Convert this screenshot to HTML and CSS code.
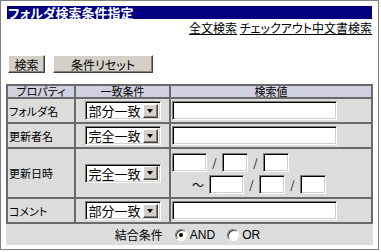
FILE: index.html
```
<!DOCTYPE html>
<html lang="ja">
<head>
    <meta charset="utf-8" />
    <title>フォルダ検索条件指定</title>
    <link rel="stylesheet" href="styles.css">
</head>
<body>
    <div id="frame">
        <div class="titleBar">フォルダ検索条件指定</div>
        <div class="links">
            <a href="#">全文検索</a>
            <a href="#">チェックアウト中文書検索</a>
        </div>

        <div class="buttons">
            <span class="btn btnSearch">検索</span>
            <span class="btn btnReset">条件リセット</span>
        </div>

        <table class="searchTable">
            <colgroup>
                <col class="colProp">
                <col class="colMatch">
                <col class="colValue">
            </colgroup>
            <tr class="headRow">
                <th>プロパティ</th>
                <th>一致条件</th>
                <th>検索値</th>
            </tr>
            <tr>
                <td class="label">フォルダ名</td>
                <td class="match">
                    <span class="select"><span class="selText">部分一致</span><span class="arrow"></span></span>
                </td>
                <td class="value"><span class="textInput wide"></span></td>
            </tr>
            <tr>
                <td class="label">更新者名</td>
                <td class="match">
                    <span class="select"><span class="selText">完全一致</span><span class="arrow"></span></span>
                </td>
                <td class="value"><span class="textInput wide"></span></td>
            </tr>
            <tr class="dateRow">
                <td class="label">更新日時</td>
                <td class="match">
                    <span class="select"><span class="selText">完全一致</span><span class="arrow"></span></span>
                </td>
                <td class="value">
                    <div class="dateLine">
                        <span class="textInput year"></span>
                        <span class="sep">/</span>
                        <span class="textInput day"></span>
                        <span class="sep">/</span>
                        <span class="textInput day"></span>
                    </div>
                    <div class="dateLine second">
                        <span class="tilde">～</span>
                        <span class="textInput year"></span>
                        <span class="sep">/</span>
                        <span class="textInput day"></span>
                        <span class="sep">/</span>
                        <span class="textInput day"></span>
                    </div>
                </td>
            </tr>
            <tr>
                <td class="label">コメント</td>
                <td class="match">
                    <span class="select"><span class="selText">部分一致</span><span class="arrow"></span></span>
                </td>
                <td class="value"><span class="textInput wide"></span></td>
            </tr>
        </table>

        <div class="joinRow">
            <span class="joinLabel">結合条件</span>
            <span class="radio checked"></span><span class="radioText">AND</span>
            <span class="radio"></span><span class="radioText">OR</span>
        </div>
    </div>
</body>
</html>
```
FILE: styles.css
```
body {
    margin: 0px;
    padding: 0px;
    background-color: #ffffff;
    font-family: "Noto Sans CJK JP", "DejaVu Sans", sans-serif;
    font-feature-settings: "palt";
    color: #000;
}

#frame {
    width: 379px;
    height: 250px;
    box-sizing: border-box;
    border: 1px solid #808080;
    padding: 5px 6px 0px 5px;
}

.titleBar {
    margin-left: 1px;
    height: 13px;
    line-height: 14px;
    background-color: #000080;
    color: #fff;
    font-weight: bold;
    font-size: 13px;
    padding-left: 1px;
    white-space: nowrap;
}

.links {
    text-align: right;
    font-size: 12px;
    line-height: 14px;
    margin-top: 2px;
    height: 14px;
}

    .links a {
        color: #000;
        text-decoration: underline;
    }

.buttons {
    display: flex;
    gap: 8px;
    margin-top: 20px;
    margin-left: 2px;
    height: 18px;
}

.btn {
    display: flex;
    align-items: center;
    justify-content: center;
    box-sizing: border-box;
    height: 18px;
    background-color: #d4d0c8;
    border-top: 1px solid #fff;
    border-left: 1px solid #fff;
    border-right: 1px solid #404040;
    border-bottom: 1px solid #404040;
    box-shadow: inset -1px -1px 0px #808080;
    font-size: 12px;
}

.btnSearch {
    width: 37px;
}

.btnReset {
    width: 100px;
}

.searchTable {
    margin-top: 11px;
    width: 367px;
    table-layout: fixed;
    border-collapse: collapse;
    border: 2px solid #6a6a6a;
    font-size: 11px;
}

.colProp {
    width: 68px;
}

.colMatch {
    width: 95px;
}

.searchTable th,
.searchTable td {
    border: 2px solid #6a6a6a;
    padding: 0px;
    background-color: #dcdcdc;
}

.searchTable th {
    background-color: #d0d0e0;
    font-weight: normal;
    height: 11px;
    line-height: 11px;
}

.searchTable td {
    height: 23px;
}

.searchTable .label {
    padding-left: 1px;
    white-space: nowrap;
}

.searchTable .match {
    text-align: center;
}

.searchTable .value {
    padding-left: 1px;
}

.dateRow td {
    height: 48px;
}

.select {
    display: inline-flex;
    align-items: center;
    vertical-align: middle;
    box-sizing: border-box;
    width: 76px;
    height: 19px;
    background-color: #fff;
    border-top: 1px solid #808080;
    border-left: 1px solid #808080;
    border-right: 1px solid #fff;
    border-bottom: 1px solid #fff;
    box-shadow: inset 1px 1px 0px #000, inset -1px -1px 0px #d4d0c8;
    padding: 2px 2px 2px 3px;
}

.selText {
    flex: 1;
    text-align: left;
    font-size: 13px;
    line-height: 13px;
}

.arrow {
    position: relative;
    width: 15px;
    height: 14px;
    box-sizing: border-box;
    background-color: #d4d0c8;
    border-top: 1px solid #fff;
    border-left: 1px solid #fff;
    border-right: 1px solid #404040;
    border-bottom: 1px solid #404040;
    box-shadow: inset -1px -1px 0px #808080;
}

    .arrow::after {
        content: "";
        position: absolute;
        left: 3px;
        top: 4px;
        border-left: 3.5px solid transparent;
        border-right: 3.5px solid transparent;
        border-top: 4px solid #000;
    }

.textInput {
    display: inline-block;
    vertical-align: middle;
    box-sizing: border-box;
    height: 19px;
    background-color: #fff;
    border-top: 1px solid #808080;
    border-left: 1px solid #808080;
    border-right: 1px solid #fff;
    border-bottom: 1px solid #fff;
    box-shadow: inset 1px 1px 0px #000, inset -1px -1px 0px #d4d0c8;
}

.wide {
    width: 165px;
}

.year {
    width: 35px;
}

.day {
    width: 26px;
}

.dateLine {
    display: flex;
    align-items: center;
    height: 19px;
}

    .dateLine.second {
        margin-top: 3px;
        padding-left: 20px;
    }

.sep {
    width: 15px;
    text-align: center;
    font-size: 11px;
}

.tilde {
    width: 17px;
    font-size: 12px;
}

.joinRow {
    display: flex;
    align-items: center;
    justify-content: center;
    height: 21px;
    width: 367px;
    background-color: #dcdcdc;
    font-size: 12px;
    padding-left: 8px;
    box-sizing: border-box;
}

.joinLabel {
    margin-right: 12px;
}

.radio {
    display: inline-block;
    box-sizing: border-box;
    width: 12px;
    height: 12px;
    border-radius: 50%;
    background-color: #fff;
    border: 1px solid;
    border-color: #808080 #fff #fff #808080;
    box-shadow: inset 1px 1px 0px #404040;
    position: relative;
    margin-right: 3px;
}

    .radio.checked::after {
        content: "";
        position: absolute;
        left: 3px;
        top: 3px;
        width: 4px;
        height: 4px;
        border-radius: 50%;
        background-color: #000;
    }

.radioText {
    font-family: "Liberation Sans", "DejaVu Sans", sans-serif;
    font-size: 12px;
    margin-right: 12px;
}
```
